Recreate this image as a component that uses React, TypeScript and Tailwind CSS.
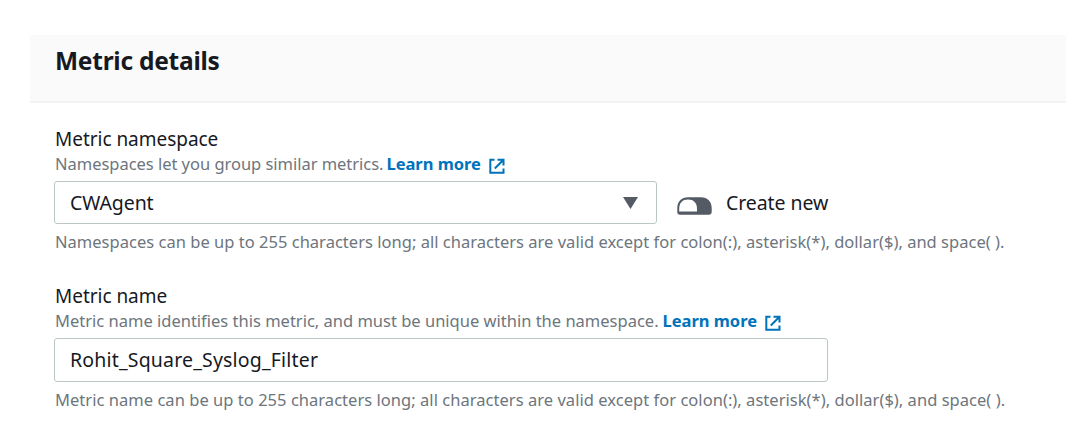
import React from "react";

function ExternalIcon() {
  return (
    <svg className="ml-2 mt-[3px] size-4 shrink-0" viewBox="0 0 16 16" fill="none" stroke="#0073bb" strokeWidth="2">
      <path d="M5.5 1.8H1.3v13H14.5V10.5" />
      <path d="M8.5 1.8h6V7.5M14 2.3L5.8 10.5" />
    </svg>
  );
}

function LearnMore() {
  return (
    <a className="flex items-center font-bold text-[#0073bb]" href="#">
      <span className="tracking-[-0.02px]">Learn more</span>
      <ExternalIcon />
    </a>
  );
}

export default function App() {
  return (
    <main className="h-[438px] w-[1066px] overflow-hidden bg-white pl-[30px] pt-[35px] font-['Noto_Sans',sans-serif] text-[16.5px] text-[#16191f]">
      <header className="h-[68px] border-b-2 border-[#f2f3f3] bg-[#fafafa] pl-[25px]">
        <h2 className="pt-[10px] text-[24.5px] font-bold leading-8 tracking-[-0.24px]">Metric details</h2>
      </header>

      <section className="pl-6 pt-[24px]">
        <div className="pl-px text-[19px] leading-6 tracking-[-0.03px]">Metric namespace</div>
        <div className="flex h-[26px] items-center whitespace-nowrap pl-px text-[#6d757d]">
          <span className="mr-[3px] tracking-[-0.03px]">Namespaces let you group similar metrics.</span>
          <LearnMore />
        </div>
        <div className="mt-[4px] flex items-center">
          <button className="flex h-[43px] w-[603px] items-center justify-between rounded-[3px] border-[1.5px] border-[#bcc6c6] pl-[15px] pr-[18px] text-[19.5px] tracking-[-0.1px]">
            <span className="pt-px">CWAgent</span>
            <svg className="h-3 w-[15px]" viewBox="0 0 15 12" fill="#545b64">
              <path d="M0 0h15L7.5 12z" />
            </svg>
          </button>
          <svg className="ml-5 mt-[6px] h-[18px] w-[35px]" viewBox="0 0 35 18">
            <path d="M.3 15V11C.3 4.5 4.5.3 11 .3h13c6.500 0 10.700 4.200 10.700 10.700v3.700a3 3 0 0 1-3 3H3a2.700 2.700 0 0 1-2.700-2.700z" fill="#545b64" />
            <path d="M2.200 14.600V11.500C2.200 6 5.500 2.600 11 2.600s9 3.400 9 8.900v3.100z" fill="#fff" />
          </svg>
          <span className="ml-[14px] pt-px text-[19.5px] tracking-[-0.08px]">Create new</span>
        </div>
        <p className="mt-[6px] whitespace-nowrap pl-px leading-6 tracking-[0.02px] text-[#6d757d]">
          Namespaces can be up to 255 characters long; all characters are valid except for colon(:), asterisk(*), dollar($), and space( ).
        </p>

        <div className="mt-[30px] pl-px text-[19px] leading-6 tracking-[-0.03px]">Metric name</div>
        <div className="flex h-[26px] items-center whitespace-nowrap pl-px text-[#6d757d]">
          <span className="mr-1">Metric name identifies this metric, and must be unique within the namespace.</span>
          <LearnMore />
        </div>
        <div className="mt-[4px] flex h-[44px] w-[774px] items-center rounded-[3px] border-[1.5px] border-[#bcc6c6] pl-[15px] text-[19.5px] tracking-[0.18px]">
          Rohit_Square_Syslog_Filter
        </div>
        <p className="mt-[6px] whitespace-nowrap pl-px leading-6 tracking-[0.035px] text-[#6d757d]">
          Metric name can be up to 255 characters long; all characters are valid except for colon(:), asterisk(*), dollar($), and space( ).
        </p>
      </section>
    </main>
  );
}
